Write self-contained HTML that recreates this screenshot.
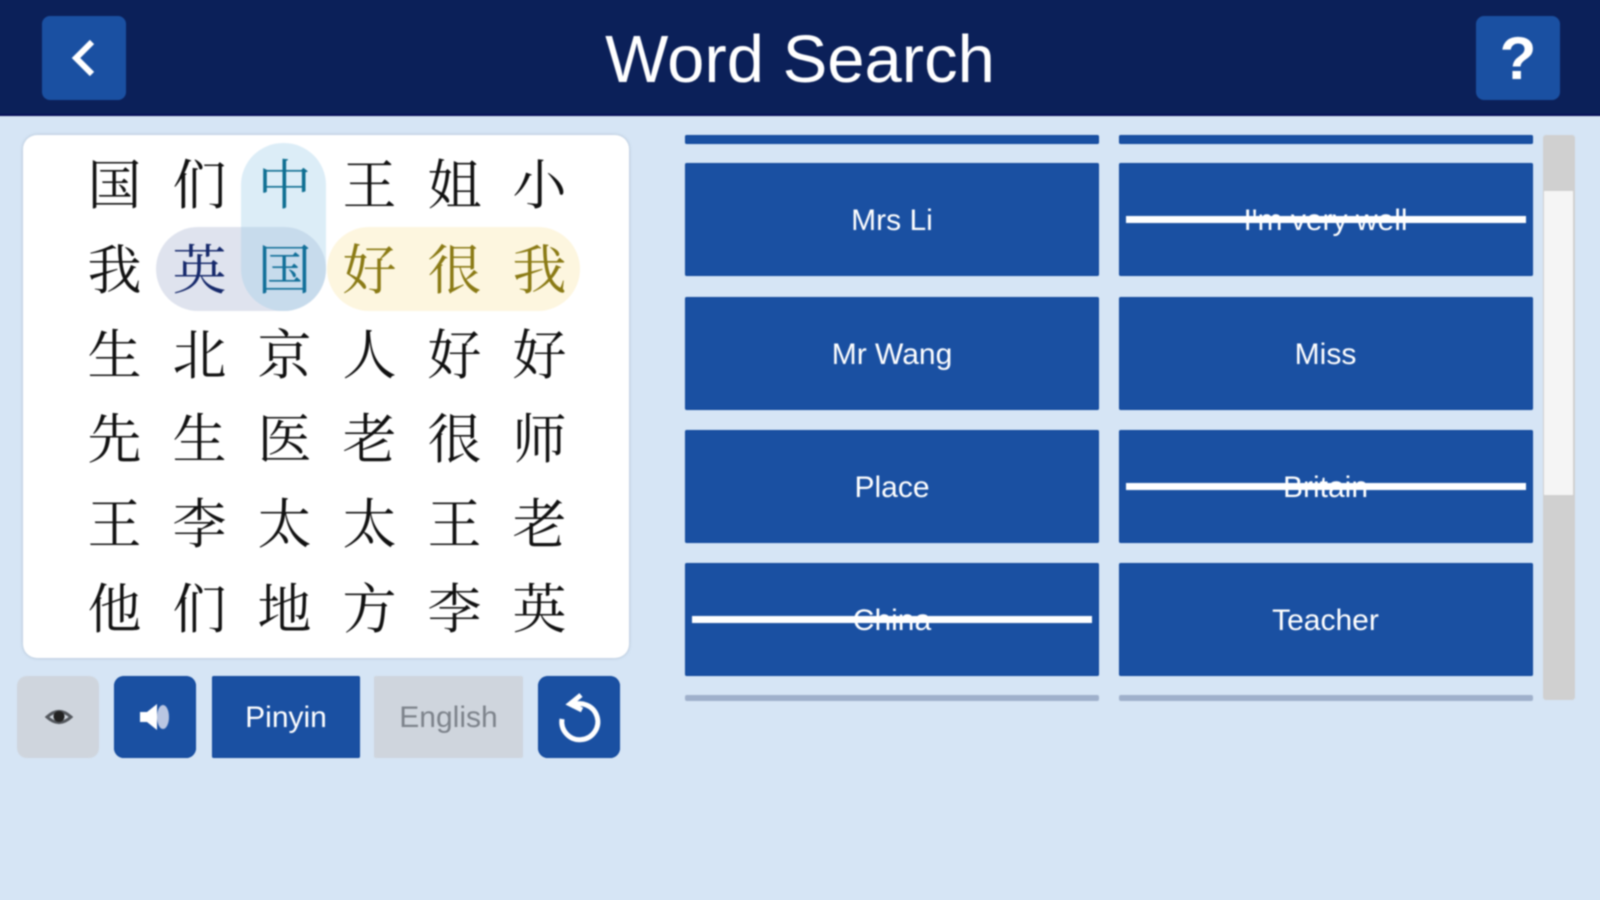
<!DOCTYPE html>
<html><head><meta charset="utf-8"><title>Word Search</title>
<style>
html,body{margin:0;padding:0;width:1600px;height:900px;overflow:hidden;background:#d6e5f5;font-family:"Liberation Sans",sans-serif}
#w{position:absolute;left:0;top:0;width:1600px;height:900px;filter:blur(.7px)}
#w div,#w svg{position:absolute}
.hd{left:-10px;top:-10px;width:1620px;height:126px;background:#0b2059;border-bottom:2px solid #050f58;box-sizing:border-box}
.tb{top:16px;width:84px;height:84px;background:#1a50a2;border-radius:8px}
.title{left:0;top:2px;width:1600px;height:116px;line-height:116px;text-align:center;color:#fff;font-size:67px}
.card{left:23px;top:135px;width:606px;height:523px;background:#fff;border-radius:14px;box-shadow:0 0 3px #a9b9cc}
.c{width:85px;height:85px;line-height:85px;text-align:center;font-family:"Noto Serif CJK SC","Liberation Serif",serif;font-size:54px;color:#111}
.b{background:#1a50a2;color:#fff;text-align:center;font-size:30px;box-shadow:inset 0 0 0 1px #0f479c}
.w{width:414px;height:113px;line-height:115px;border-radius:2px}
.l{left:685px}.r{left:1118.500px}
.st{width:400px;height:7px;background:#fff}
.tool{top:676px;height:82px;line-height:84px;border-radius:2px}
.ic{width:82px;border-radius:10px}
.off{background:#cfd5dd;color:#7d838b}
</style></head><body><div id="w">
<div class="hd"></div>
<div class="tb" style="left:42px"></div>
<svg style="left:42px;top:16px" width="84" height="84" viewBox="0 0 84 84"><path d="M50 26 L34 42 L50 58" fill="none" stroke="#fff" stroke-width="6"/></svg>
<div class="title">Word Search</div>
<div class="tb" style="left:1476px"></div>
<div style="left:1476px;top:17px;width:84px;height:84px;line-height:84px;text-align:center;color:#fff;font-weight:bold;font-size:60px">?</div>

<div class="card"></div>
<div style="left:156px;top:227px;width:170px;height:84px;border-radius:42px;background:#dfe3ee"></div>
<div style="left:327px;top:227px;width:253px;height:84px;border-radius:42px;background:#fdf6df"></div>
<div style="left:241px;top:143px;width:85px;height:168px;border-radius:42px;background:#9ccae8;opacity:.35"></div>

<div class="c" style="left:72px;top:139px">国</div><div class="c" style="left:157px;top:139px">们</div><div class="c" style="left:242px;top:139px;color:#0f6f92">中</div><div class="c" style="left:327px;top:139px">王</div><div class="c" style="left:412px;top:139px">姐</div><div class="c" style="left:497px;top:139px">小</div>
<div class="c" style="left:72px;top:224px">我</div><div class="c" style="left:157px;top:224px;color:#16296b">英</div><div class="c" style="left:242px;top:224px;color:#116f99">国</div><div class="c" style="left:327px;top:224px;color:#8a7a14">好</div><div class="c" style="left:412px;top:224px;color:#8a7a14">很</div><div class="c" style="left:497px;top:224px;color:#8a7a14">我</div>
<div class="c" style="left:72px;top:309px">生</div><div class="c" style="left:157px;top:309px">北</div><div class="c" style="left:242px;top:309px">京</div><div class="c" style="left:327px;top:309px">人</div><div class="c" style="left:412px;top:309px">好</div><div class="c" style="left:497px;top:309px">好</div>
<div class="c" style="left:72px;top:393px">先</div><div class="c" style="left:157px;top:393px">生</div><div class="c" style="left:242px;top:393px">医</div><div class="c" style="left:327px;top:393px">老</div><div class="c" style="left:412px;top:393px">很</div><div class="c" style="left:497px;top:393px">师</div>
<div class="c" style="left:72px;top:478px">王</div><div class="c" style="left:157px;top:478px">李</div><div class="c" style="left:242px;top:478px">太</div><div class="c" style="left:327px;top:478px">太</div><div class="c" style="left:412px;top:478px">王</div><div class="c" style="left:497px;top:478px">老</div>
<div class="c" style="left:72px;top:563px">他</div><div class="c" style="left:157px;top:563px">们</div><div class="c" style="left:242px;top:563px">地</div><div class="c" style="left:327px;top:563px">方</div><div class="c" style="left:412px;top:563px">李</div><div class="c" style="left:497px;top:563px">英</div>

<div class="tool ic off" style="left:17px"></div>
<svg style="left:17px;top:676px" width="82" height="82" viewBox="0 0 82 82"><path d="M30 41 Q42 30 54 41 Q42 52 30 41Z" fill="none" stroke="#55595f" stroke-width="3"/><circle cx="42" cy="40.500" r="5.500" fill="#222"/></svg>
<div class="tool ic b" style="left:114px"></div>
<svg style="left:114px;top:676px" width="82" height="82" viewBox="0 0 82 82"><path d="M26 36 H33 L43 28 V54 L33 46 H26Z" fill="#fff"/><ellipse cx="49" cy="41" rx="6" ry="12" fill="#b9c6e2"/></svg>
<div class="tool b" style="left:212px;width:148px">Pinyin</div>
<div class="tool off" style="left:374px;width:149px;text-align:center;font-size:30px">English</div>
<div class="tool ic b" style="left:538px"></div>
<svg style="left:538px;top:676px" width="82" height="82" viewBox="0 0 82 82"><path d="M33 30 A18 18 0 1 1 24 43 M43 19 L32 28 L44 34" fill="none" stroke="#fff" stroke-width="5"/></svg>

<div class="b l" style="top:135px;width:414px;height:9px;border-radius:2px"></div>
<div class="b r" style="top:135px;width:414px;height:9px;border-radius:2px"></div>
<div class="b w l" style="top:163px">Mrs Li</div>
<div class="b w r" style="top:163px">I'm very well</div><div class="st" style="left:1126px;top:216px"></div>
<div class="b w l" style="top:297px">Mr Wang</div>
<div class="b w r" style="top:297px">Miss</div>
<div class="b w l" style="top:430px">Place</div>
<div class="b w r" style="top:430px">Britain</div><div class="st" style="left:1126px;top:483px"></div>
<div class="b w l" style="top:563px">China</div><div class="st" style="left:692px;top:616px"></div>
<div class="b w r" style="top:563px">Teacher</div>
<div class="l" style="top:695px;width:414px;height:6px;background:#9fb0cb;border-radius:2px"></div>
<div class="r" style="top:695px;width:414px;height:6px;background:#9fb0cb;border-radius:2px"></div>

<div style="left:1543px;top:135px;width:32px;height:565px;background:#d0d0d0;border-radius:3px"></div>
<div style="left:1544px;top:191px;width:29px;height:304px;background:#f5f5f5"></div>
</div></body></html>
